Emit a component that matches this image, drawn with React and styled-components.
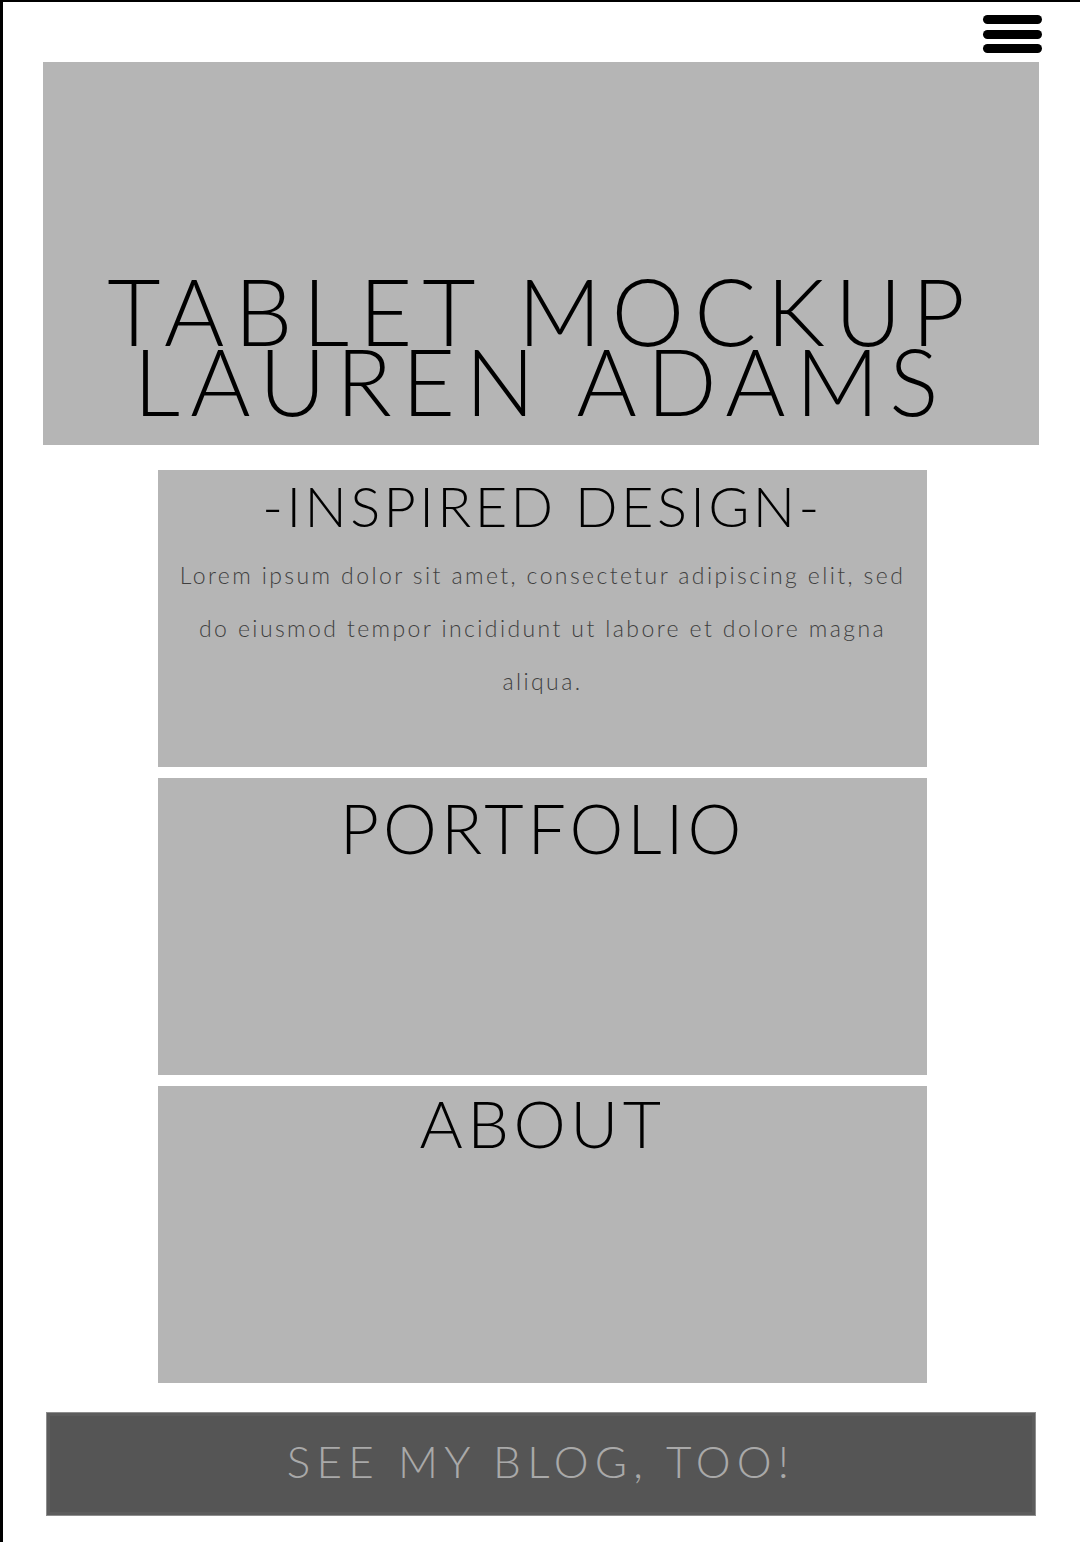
import styled, { createGlobalStyle } from "styled-components";

const GlobalStyle = createGlobalStyle`
    html, body {
        margin: 0;
        padding: 0;
        background: #fff;
    }
    * {
        box-sizing: border-box;
    }
`;

const Page = styled.div`
    width: 1080px;
    height: 1542px;
    border-left: 3px solid #000;
    border-top: 2px solid #000;
    background: #fff;
    font-family: "Lato", "Open Sans", sans-serif;
    font-weight: 300;
    display: flex;
    flex-direction: column;
`;

const TopBar = styled.div`
    display: flex;
    justify-content: flex-end;
    padding: 13px 38px 0 0;
    height: 60px;
`;

const MenuButton = styled.button`
    width: 59px;
    height: 38px;
    padding: 0;
    border: none;
    background: transparent;
    display: flex;
    flex-direction: column;
    justify-content: space-between;
    cursor: pointer;
`;

const MenuBar = styled.span`
    display: block;
    height: 9px;
    width: 100%;
    border-radius: 5px;
    background: #000;
`;

const Hero = styled.header`
    margin-left: 40px;
    width: 996px;
    height: 383px;
    background: #b5b5b5;
    display: flex;
    flex-direction: column;
    justify-content: flex-end;
    align-items: center;
    padding-bottom: 29px;
`;

const HeroTitle = styled.h1`
    margin: 0;
    font-size: 92px;
    font-weight: 300;
    line-height: 70px;
    letter-spacing: 10px;
    color: #000;
    text-align: center;
    text-transform: uppercase;
`;

const Cards = styled.main`
    margin: 25px 0 0 155px;
    width: 769px;
    display: flex;
    flex-direction: column;
    gap: 11px;
`;

const Card = styled.section`
    height: 297px;
    background: #b5b5b5;
    padding: ${(p) => p.$top}px 16px 0;
    text-align: center;
`;

const CardTitle = styled.h2`
    margin: 0;
    font-size: ${(p) => p.$size}px;
    font-weight: 300;
    line-height: 1;
    letter-spacing: ${(p) => p.$spacing}px;
    color: #000;
`;

const CardText = styled.p`
    margin: 15px 0 0;
    font-size: 23px;
    font-weight: 300;
    line-height: 53px;
    letter-spacing: 2.4px;
    color: #3f3f3f;
`;

const BlogBar = styled.a`
    margin: 29px 0 0 43px;
    width: 990px;
    height: 104px;
    padding-bottom: 7px;
    background: #555;
    border: 1px solid #8d8d8d;
    box-shadow: inset 0 0 0 3px #5c5c5c;
    display: flex;
    align-items: center;
    justify-content: center;
    font-size: 44px;
    font-weight: 300;
    letter-spacing: 6.2px;
    color: #a9a9a9;
    text-decoration: none;
`;

export default function App() {
    return (
        <>
            <GlobalStyle />
            <Page>
                <TopBar>
                    <MenuButton aria-label="Menu">
                        <MenuBar />
                        <MenuBar />
                        <MenuBar />
                    </MenuButton>
                </TopBar>
                <Hero>
                    <HeroTitle>
                        Tablet Mockup
                        <br />
                        Lauren Adams
                    </HeroTitle>
                </Hero>
                <Cards>
                    <Card $top={8}>
                        <CardTitle $size={56} $spacing={3.4}>-INSPIRED DESIGN-</CardTitle>
                        <CardText>
                            Lorem ipsum dolor sit amet, consectetur adipiscing elit, sed do eiusmod tempor incididunt ut labore et dolore magna aliqua.
                        </CardText>
                    </Card>
                    <Card $top={16}>
                        <CardTitle $size={68} $spacing={4}>PORTFOLIO</CardTitle>
                    </Card>
                    <Card $top={4}>
                        <CardTitle $size={66} $spacing={4.5}>ABOUT</CardTitle>
                    </Card>
                </Cards>
                <BlogBar href="#">SEE MY BLOG, TOO!</BlogBar>
            </Page>
        </>
    );
}
